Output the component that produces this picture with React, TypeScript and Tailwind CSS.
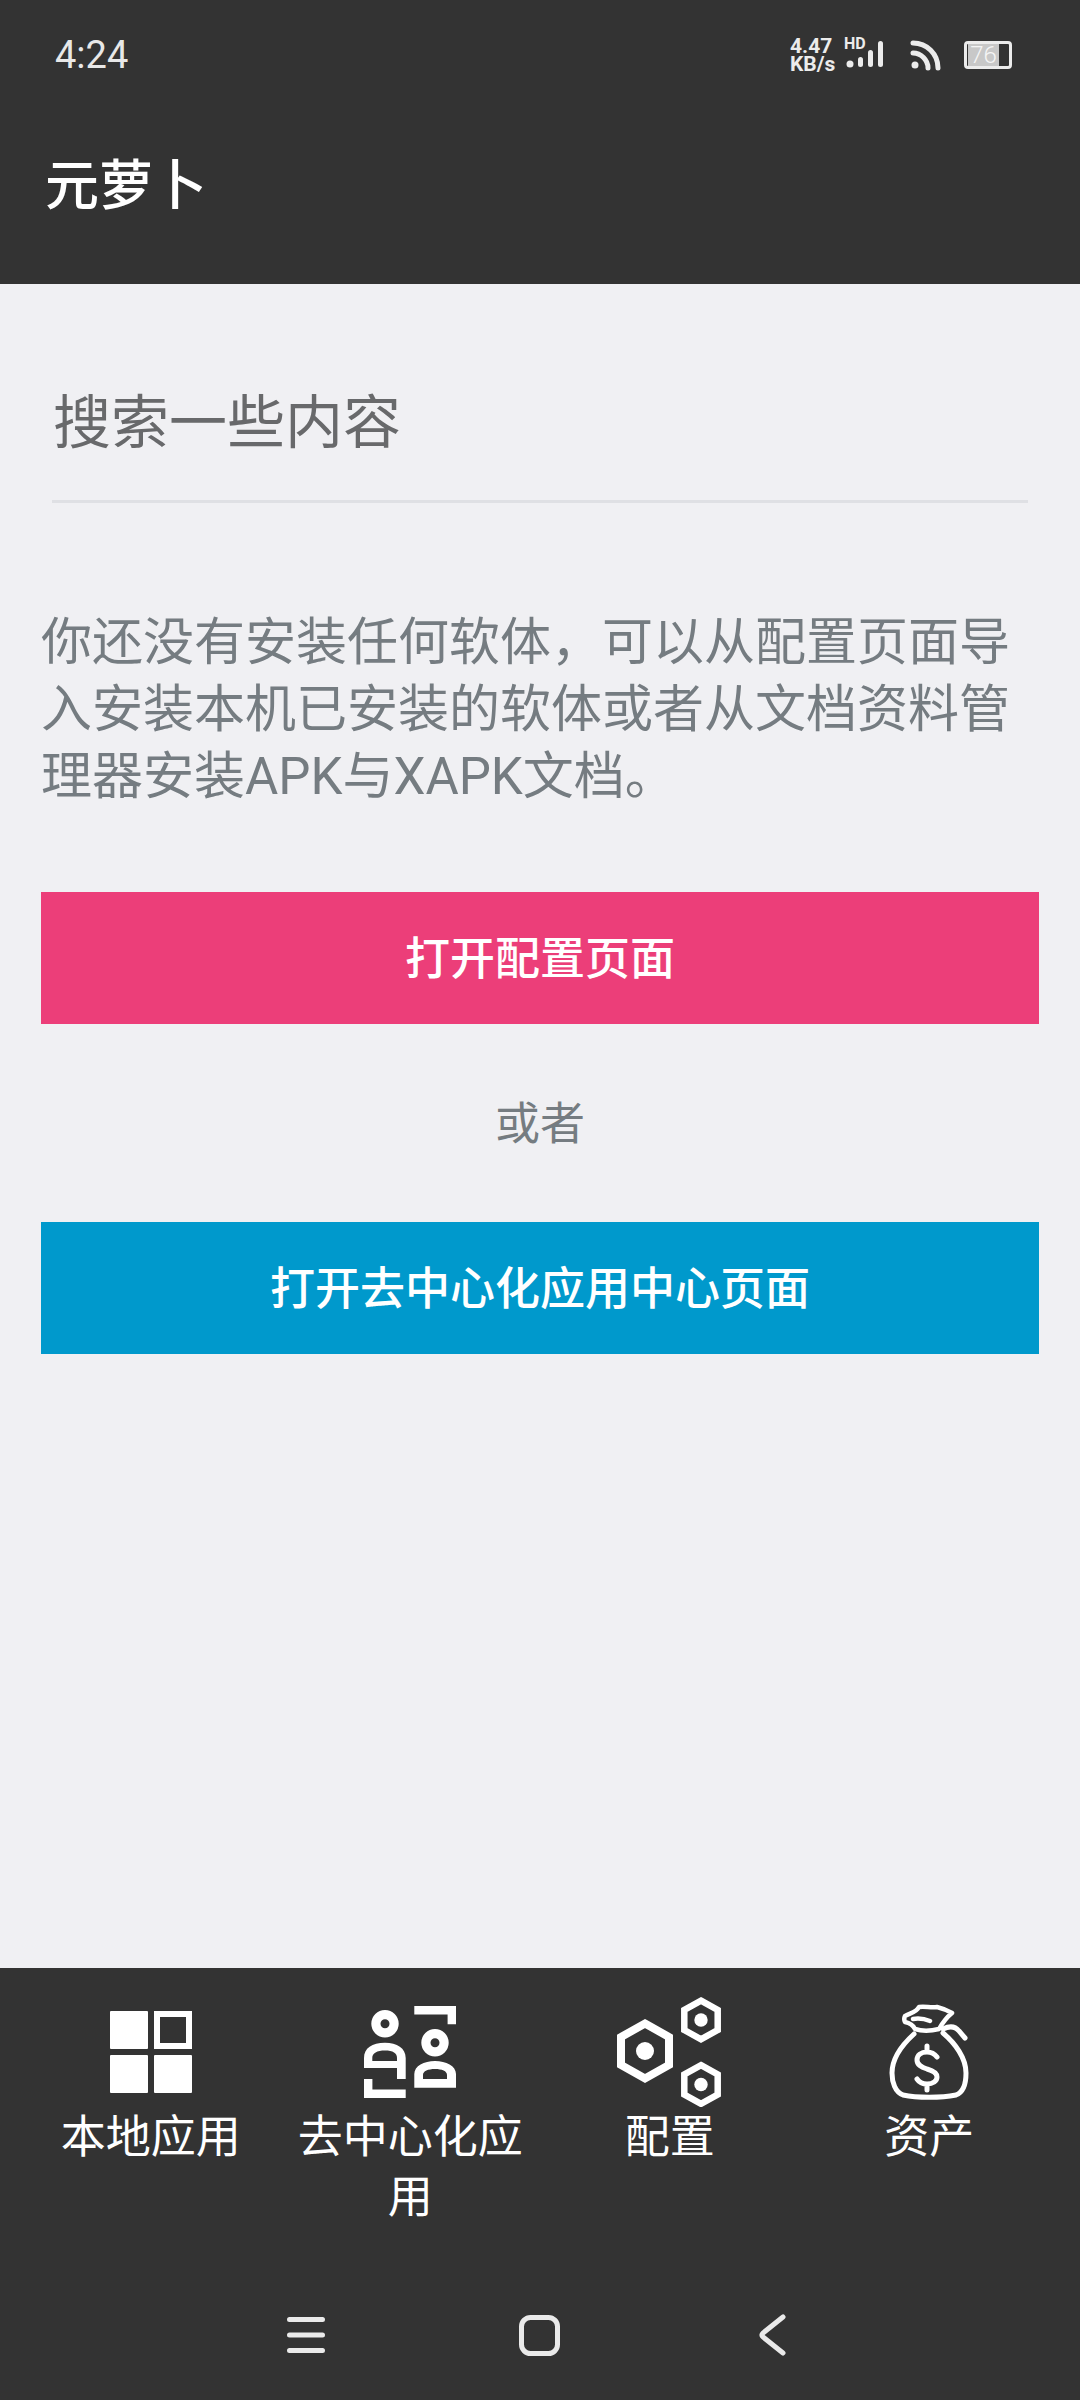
const FONT = "font-['Roboto','Noto_Sans_CJK_SC',sans-serif]";

function StatusBar() {
  return (
    <div className="h-[110px] flex items-center justify-between pl-[55px] pr-[68px]">
      <span className="text-[38px] leading-none text-[#e8e8e8]">4:24</span>
      <div className="flex items-center">
        <div className="w-[48px] text-[21px] leading-[18px] font-bold text-[#ececec]">
          4.47
          <br />
          KB/s
        </div>
        <div className="relative ml-[6px] w-[40px] h-[32px]">
          <span className="absolute left-0 top-[-3px] text-[16px] leading-[15px] font-bold text-[#ececec]">HD</span>
          <svg width="40" height="32" viewBox="0 0 40 32" className="block">
            <circle cx="6" cy="25" r="3.500" fill="#ececec" />
            <rect x="14" y="18" width="5" height="10" rx="2.500" fill="#ececec" />
            <rect x="24" y="11" width="5" height="17" rx="2.500" fill="#ececec" />
            <rect x="34" y="2" width="5" height="26" rx="2.500" fill="#ececec" />
          </svg>
        </div>
        <svg width="32" height="32" viewBox="0 0 32 32" className="ml-[26px]">
          <path d="M3 4C17 4 28 15 28 29M3 14C11 14 18 21 18 29" fill="none" stroke="#ececec" strokeWidth="5" strokeLinecap="round" />
          <circle cx="5" cy="26" r="3.500" fill="#ececec" />
        </svg>
        <div className="ml-[22px] w-[48px] h-[28px] rounded-[4px] border-[3px] border-[#ececec] pl-[1px] flex">
          <div className="h-full w-[31px] bg-[#c8c8c8] flex items-center justify-center text-[24px] leading-none font-light text-[#f5f5f5]">76</div>
        </div>
      </div>
    </div>
  );
}

function GridIcon() {
  return (
    <svg width="82" height="82" viewBox="0 0 82 82">
      <rect x="0" y="0" width="38" height="38" rx="1" fill="#fff" />
      <path fillRule="evenodd" d="M44 0h38v38h-38zM50 6v26h26v-26z" fill="#fff" />
      <rect x="0" y="44" width="38" height="38" rx="1" fill="#fff" />
      <rect x="44" y="44" width="38" height="38" rx="1" fill="#fff" />
    </svg>
  );
}

function PeopleIcon() {
  return (
    <svg width="92" height="92" viewBox="0 0 92 92">
      <path d="M50.300 4.200H87.800V18.300M4.200 73V87.800H41.700" fill="none" stroke="#fff" strokeWidth="8.400" />
      <circle cx="21" cy="17.700" r="9.100" fill="none" stroke="#fff" strokeWidth="9.200" />
      <circle cx="71" cy="36.700" r="9.100" fill="none" stroke="#fff" strokeWidth="9.200" />
      <path fillRule="evenodd" d="M0 62V52C0 42 8 36.700 21 36.700C33 36.700 41.700 42 41.700 52V73H33V62ZM8.300 55H33V52C33 47 29 44.500 21 44.500C13 44.500 8.300 47 8.300 52Z" fill="#fff" />
      <path fillRule="evenodd" d="M50.300 81.700V68C50.300 60 60 55 71 55C82 55 92 60 92 68V81.700ZM59 73H83V69C83 65 78 63 71 63C64 63 59 65 59 69Z" fill="#fff" />
    </svg>
  );
}

function HexIcon() {
  return (
    <svg width="104" height="110" viewBox="0 0 104 110" className="-ml-[1px]">
      <path d="M28 26.500L52 40V68L28 81.500L4 68V40Z" fill="none" stroke="#fff" strokeWidth="8" />
      <circle cx="28" cy="54" r="9" fill="#fff" />
      <path d="M84 3.700L100.700 13V33L84 42.300L67.300 33V13Z" fill="none" stroke="#fff" strokeWidth="6.500" />
      <circle cx="84" cy="23" r="6.700" fill="#fff" />
      <path d="M84 68.200L100.700 77.500V97.500L84 106.800L67.300 97.500V77.500Z" fill="none" stroke="#fff" strokeWidth="6.500" />
      <circle cx="84" cy="87.500" r="6.700" fill="#fff" />
    </svg>
  );
}

function BagIcon() {
  return (
    <svg width="80" height="96" viewBox="0 0 80 96">
      <path d="M16 12C20 9 27 9 30 3C36 2 42 4 48 3C52 4 58 6 63 9C58 13 54 18 50 25C42 27 32 27 26 25C24 21 21 19 16 18C15 16 15 14 16 12ZM24 15C30 14 36 15 41 17" fill="none" stroke="#fff" strokeWidth="4.500" strokeLinecap="round" strokeLinejoin="round" />
      <path d="M25 30C14 40 3 54 3 69C3 78 6 88 14 91C28 94 52 94 67 91C75 88 77 78 77 69C77 54 66 39 54 29" fill="none" stroke="#fff" strokeWidth="5" strokeLinecap="round" />
      <path d="M54 25C60 22 66 22 70 27L76 34" fill="none" stroke="#fff" strokeWidth="5" strokeLinecap="round" />
      <path d="M48 53C45 49 42 48 38 48C32 48 28 51 28 56C28 61 32 63 38 65C45 67 48 69 48 73C48 77 44 80 38 80C33 80 30 78 28 75M38 42V48M38 80V86" fill="none" stroke="#fff" strokeWidth="5" strokeLinecap="round" />
    </svg>
  );
}

function TabItem({ icon, label }: { icon: React.ReactNode; label: string }) {
  return (
    <div className="flex flex-col items-center">
      <div className="h-[110px] flex items-center justify-center">{icon}</div>
      <span className="w-[230px] mt-[1px]">{label}</span>
    </div>
  );
}

export default function App() {
  return (
    <div className={`w-[1080px] h-[2400px] flex flex-col bg-[#f0f0f3] ${FONT}`}>
      <header className="h-[284px] bg-[#333333] shrink-0 flex flex-col">
        <StatusBar />
        <div className="h-[148px] flex items-center pl-[45px] pt-[5px] text-[54px] font-medium text-white">元萝卜</div>
      </header>
      <main className="flex-1 px-[41px]">
        <div className="mx-[11px] mt-[56px] h-[163px] border-b-[3px] border-[#dfe0e4] flex items-center pl-[1px] pt-[7px] text-[58px] text-[#68696b]">搜索一些内容</div>
        <p className="mt-[106px] text-[51px] leading-[67px] text-[#757c81]">你还没有安装任何软体，可以从配置页面导入安装本机已安装的软体或者从文档资料管理器安装APK与XAPK文档。</p>
        <button className="mt-[82px] w-full h-[132px] bg-[#ec3e79] text-white text-[45px] font-medium flex items-center justify-center pt-[3px]">打开配置页面</button>
        <div className="h-[198px] flex items-center justify-center pt-[3px] text-[45px] text-[#757c81]">或者</div>
        <button className="w-full h-[132px] bg-[#0099cc] text-white text-[45px] font-medium flex items-center justify-center pt-[3px]">打开去中心化应用中心页面</button>
      </main>
      <footer className="h-[432px] bg-[#333333] shrink-0 flex flex-col">
        <nav className="h-[284px] grid grid-cols-4 px-[21px] pt-[29px] text-[45px] leading-[60px] text-white text-center">
          <TabItem icon={<GridIcon />} label="本地应用" />
          <TabItem icon={<PeopleIcon />} label="去中心化应用" />
          <TabItem icon={<HexIcon />} label="配置" />
          <TabItem icon={<BagIcon />} label="资产" />
        </nav>
        <div className="flex-1 flex items-center pl-[287px] pt-[18px]">
          <svg width="38" height="40" viewBox="0 0 38 40"><path d="M2.500 4.500H35.500M2.500 20H35.500M2.500 35.500H35.500" stroke="#eaeaea" strokeWidth="5" strokeLinecap="round" /></svg>
          <svg width="41" height="41" viewBox="0 0 41 41" className="ml-[194px]"><rect x="2.500" y="2.500" width="36" height="36" rx="9" fill="none" stroke="#eaeaea" strokeWidth="5" /></svg>
          <svg width="28" height="42" viewBox="0 0 28 42" className="ml-[199px]"><path d="M24 3L4 19Q2 21 4 23L24 39" fill="none" stroke="#eaeaea" strokeWidth="5" strokeLinecap="round" /></svg>
        </div>
      </footer>
    </div>
  );
}
